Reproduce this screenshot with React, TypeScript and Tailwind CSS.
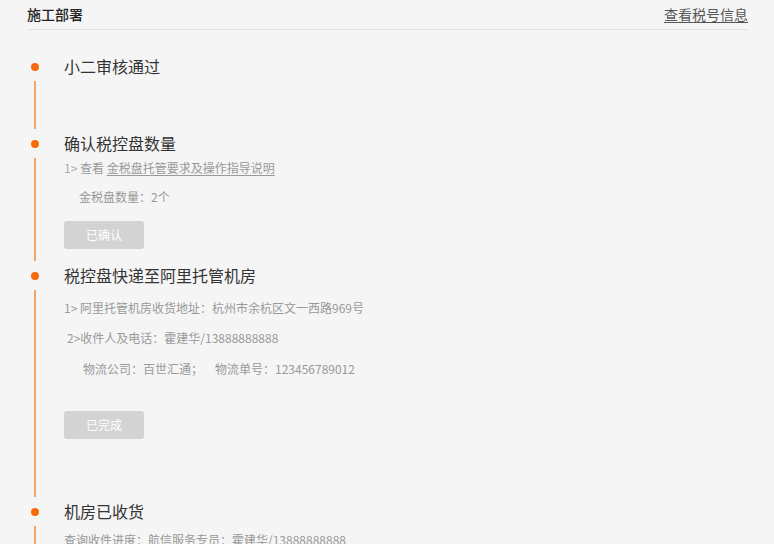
const font = { fontFamily: '"Noto Sans CJK SC", "Noto Sans", sans-serif' };

type Step = {
  title: string;
  body?: React.ReactNode;
  pad: string;
  last?: boolean;
};

function Dot() {
  return <span className="mt-[7px] block h-2 w-2 shrink-0 rounded-full bg-[#f56b0c]" />;
}

function StepRow({ title, body, pad, last }: Step) {
  return (
    <div className="flex">
      <div className="flex w-[36px] flex-col pl-[3px]">
        <div className="flex w-2 flex-1 flex-col items-center">
          <Dot />
          <span className={`mt-[10px] w-[2px] flex-1 bg-[#f4a567] ${last ? "" : "mb-[4px]"}`} />
        </div>
      </div>
      <div className={`flex-1 ${pad}`}>
        <h3 className="text-[16px] leading-[20px] text-[#333]">{title}</h3>
        {body}
      </div>
    </div>
  );
}

function DoneButton({ label }: { label: string }) {
  return (
    <div className="flex h-[28px] w-[80px] items-center justify-center rounded-[3px] bg-[#d3d3d3] text-[12px] text-white">
      {label}
    </div>
  );
}

export default function App() {
  return (
    <div className="h-[544px] overflow-hidden bg-[#f5f5f5] pl-[27px] pr-[26px]" style={font}>
      <header className="flex items-end justify-between border-b border-[#e2e2e2] pb-[5px] pt-[4px]">
        <span className="text-[14px] font-medium leading-[20px] text-[#222]">施工部署</span>
        <a className="text-[14px] leading-[20px] text-[#555] underline underline-offset-2">查看税号信息</a>
      </header>

      <div className="pl-[1px] pt-[26px]">
        <StepRow title="小二审核通过" pad="pb-[57px]" />
        <StepRow
          title="确认税控盘数量"
          pad="pb-[16px]"
          body={
            <div className="text-[12px] text-[#999]">
              <p className="mt-[6px] leading-[18px]">
                <span className="text-[#aaa]">1&gt;</span> 查看{" "}
                <span className="underline underline-offset-2">金税盘托管要求及操作指导说明</span>
              </p>
              <p className="mt-[11px] pl-[15px] leading-[18px]">金税盘数量：2个</p>
              <div className="mt-[15px]">
                <DoneButton label="已确认" />
              </div>
            </div>
          }
        />
        <StepRow
          title="税控盘快递至阿里托管机房"
          pad="pb-[62px]"
          body={
            <div className="text-[12px] text-[#999]">
              <p className="mt-[14px] leading-[18px]">1&gt; 阿里托管机房收货地址：杭州市余杭区文一西路969号</p>
              <p className="mt-[12px] pl-[3px] leading-[18px]">2&gt;收件人及电话：霍建华/13888888888</p>
              <p className="mt-[13px] pl-[19px] leading-[18px]">
                物流公司：百世汇通；<span className="ml-[12px]">物流单号：123456789012</span>
              </p>
              <div className="mt-[33px]">
                <DoneButton label="已完成" />
              </div>
            </div>
          }
        />
        <StepRow
          title="机房已收货"
          pad="pb-[40px]"
          last
          body={
            <div className="text-[12px] text-[#999]">
              <p className="mt-[10px] leading-[18px]">查询收件进度：航信服务专员：霍建华/13888888888</p>
            </div>
          }
        />
      </div>
    </div>
  );
}
